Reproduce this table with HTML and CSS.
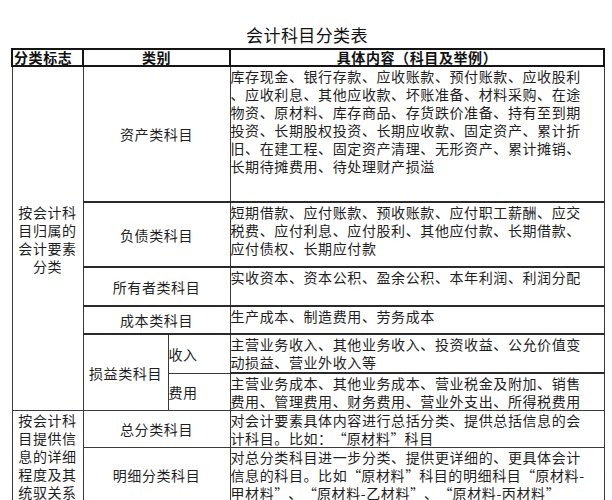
FILE: index.html
```html
<!DOCTYPE html>
<html lang="zh-CN">
<head>
<meta charset="utf-8">
<title>会计科目分类表</title>
<link rel="stylesheet" href="styles.css">
</head>
<body>
<div class="page">
  <h1 class="title">会计科目分类表</h1>
  <table class="sheet">
    <colgroup>
      <col class="c1">
      <col class="c2a">
      <col class="c2b">
      <col class="c3">
    </colgroup>
    <thead>
      <tr class="r-head">
        <th class="h-left">分类标志</th>
        <th colspan="2">类别</th>
        <th>具体内容（科目及举例）</th>
      </tr>
    </thead>
    <tbody>
      <tr class="r-asset">
        <td rowspan="6" class="group g1">按会计科<br>目归属的<br>会计要素<br>分类</td>
        <td colspan="2" class="cat">资产类科目</td>
        <td class="content">库存现金、银行存款、应收账款、预付账款、应收股利<br>、应收利息、其他应收款、坏账准备、材料采购、在途<br>物资、原材料、库存商品、存货跌价准备、持有至到期<br>投资、长期股权投资、长期应收款、固定资产、累计折<br>旧、在建工程、固定资产清理、无形资产、累计摊销、<br>长期待摊费用、待处理财产损溢</td>
      </tr>
      <tr class="r-liab thick">
        <td colspan="2" class="cat">负债类科目</td>
        <td class="content">短期借款、应付账款、预收账款、应付职工薪酬、应交<br>税费、应付利息、应付股利、其他应付款、长期借款、<br>应付债权、长期应付款</td>
      </tr>
      <tr class="r-owner thick">
        <td colspan="2" class="cat">所有者类科目</td>
        <td class="content">实收资本、资本公积、盈余公积、本年利润、利润分配</td>
      </tr>
      <tr class="r-cost thick">
        <td colspan="2" class="cat">成本类科目</td>
        <td class="content">生产成本、制造费用、劳务成本</td>
      </tr>
      <tr class="r-income thick">
        <td rowspan="2" class="cat">损益类科目</td>
        <td class="sub">收入</td>
        <td class="content">主营业务收入、其他业务收入、投资收益、公允价值变<br>动损益、营业外收入等</td>
      </tr>
      <tr class="r-expense thick-content">
        <td class="sub">费用</td>
        <td class="content">主营业务成本、其他业务成本、营业税金及附加、销售<br>费用、管理费用、财务费用、营业外支出、所得税费用</td>
      </tr>
      <tr class="r-general">
        <td rowspan="2" class="group g2">按会计科<br>目提供信<br>息的详细<br>程度及其<br>统驭关系</td>
        <td colspan="2" class="cat">总分类科目</td>
        <td class="content">对会计要素具体内容进行总括分类、提供总括信息的会<br>计科目。比如：<span class="qo">“</span>原材料<span class="qc">”</span>科目</td>
      </tr>
      <tr class="r-detail">
        <td colspan="2" class="cat">明细分类科目</td>
        <td class="content">对总分类科目进一步分类、提供更详细的、更具体会计<br>信息的科目。比如<span class="qo">“</span>原材料<span class="qc">”</span>科目的明细科目<span class="qo">“</span>原材料-<br>甲材料<span class="qc">”</span>、<span class="qo">“</span>原材料-乙材料<span class="qc">”</span>、<span class="qo">“</span>原材料-丙材料<span class="qc">”</span></td>
      </tr>
    </tbody>
  </table>
</div>
</body>
</html>
```

FILE: styles.css
```css
html, body {
  margin: 0;
  padding: 0;
  background: #ffffff;
}

body {
  font-family: "Noto Sans CJK SC", "Noto Sans", sans-serif;
  color: #1e1e1e;
}

.page {
  display: flex;
  flex-direction: column;
  padding: 25px 0 0 11px;
}

.title {
  width: 592px;
  margin: 0 0 3px;
  font-size: 17px;
  line-height: 20px;
  font-weight: normal;
  text-align: center;
  letter-spacing: 0.4px;
  color: #111;
}

.sheet {
  width: 592px;
  border-collapse: collapse;
  table-layout: fixed;
  font-size: 14px;
  line-height: 18px;
  letter-spacing: 0.6px;
}

.c1 { width: 71px; }
.c2a { width: 85px; }
.c2b { width: 62px; }
.c3 { width: 374px; }

.sheet th,
.sheet td {
  border: 1px solid #3a3a3a;
  padding: 0;
}

.sheet th {
  border: 2px solid #151515;
  font-weight: bold;
  line-height: 15px;
  text-align: center;
  color: #111;
}

.sheet th.h-left {
  text-align: left;
  padding-left: 1px;
}

.r-head { height: 17px; }
.r-asset { height: 136px; }
.r-liab { height: 65px; }
.r-owner { height: 39px; }
.r-cost { height: 28px; }
.r-income { height: 39px; }
.r-expense { height: 36px; }
.r-general { height: 36px; }
.r-detail { height: 53px; }

.thick td.cat,
.thick td.content,
.thick td.sub,
.thick-content td.content {
  border-top-width: 2px;
  border-top-color: #2a2a2a;
}

.content {
  vertical-align: top;
  text-align: left;
  white-space: nowrap;
  padding: 2px 0 0 3px;
}

.qo,
.qc {
  display: inline-block;
  width: 14px;
}

.qo { text-align: right; }
.qc { text-align: left; }

.cat {
  vertical-align: middle;
  text-align: center;
  white-space: nowrap;
}

.sub {
  vertical-align: middle;
  text-align: left;
  padding-left: 4px;
}

.group {
  text-align: center;
  white-space: nowrap;
}

.g1 {
  vertical-align: middle;
  border-left: none;
  border-left-style: hidden;
}

.g2 {
  vertical-align: top;
  padding-top: 1px;
}
```
